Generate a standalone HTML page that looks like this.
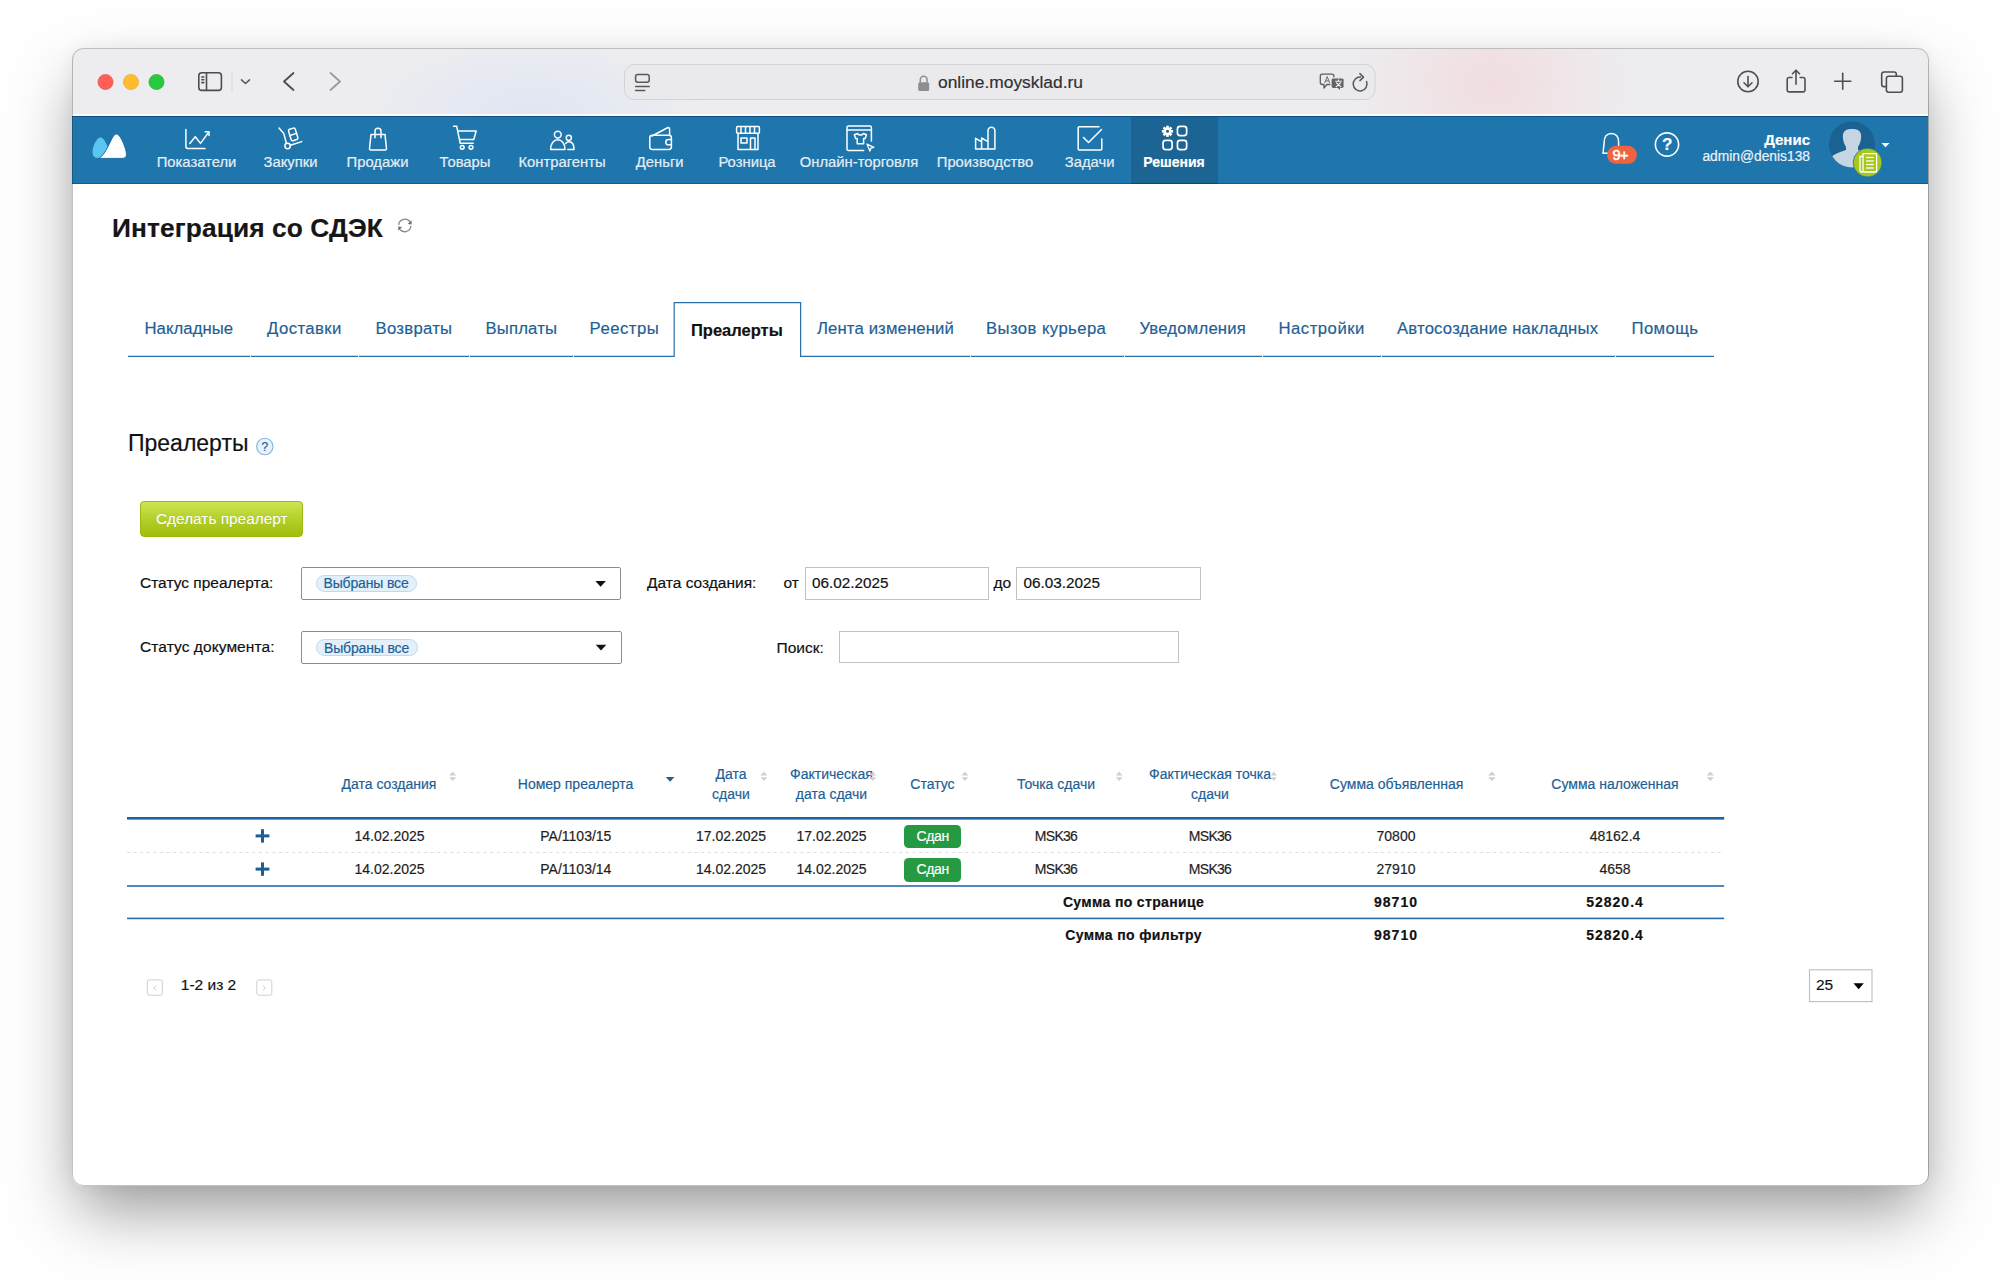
<!DOCTYPE html>
<html><head><meta charset="utf-8">
<style>
*{box-sizing:border-box;margin:0;padding:0}
html,body{width:2000px;height:1280px;overflow:hidden;background:#fefefe;font-family:"Liberation Sans",sans-serif}
.a{position:absolute}
.t{position:absolute;white-space:nowrap;line-height:1;-webkit-text-stroke:0.18px currentColor}
.c{font-size:14px;transform:translateX(-50%)}
#win{position:absolute;left:72px;top:48px;width:1856px;height:1138px;border-radius:11px;background:#fff;overflow:hidden;
 box-shadow:0 30px 64px -6px rgba(0,0,0,0.40),0 0 18px rgba(0,0,0,0.05)}
#wb{position:absolute;left:71.5px;top:47.6px;width:1857px;height:1138.6px;border-radius:11.5px;border:1px solid rgba(0,0,0,0.24);pointer-events:none}
#tb{position:absolute;left:0;top:0;width:1856px;height:66px;border-top:1.2px solid #fafafb;
 background:radial-gradient(ellipse 170px 75px at 458px 64px,rgba(210,222,246,0.5),rgba(210,222,246,0) 100%),radial-gradient(ellipse 150px 120px at 1420px 34px,rgba(244,208,210,0.55),rgba(244,208,210,0) 100%),#ededf0}
#nav{position:absolute;left:0;top:67.5px;width:1856px;height:68.2px;background:#1f76ad;border-top:1.6px solid #0f5088;border-bottom:1.5px solid #0b5c9b}
#wl{position:absolute;left:0;top:66px;width:1856px;height:1.5px;background:#fbfbfc}
.ni{-webkit-text-stroke:0.2px currentColor;position:absolute;top:154.7px;color:#e4eef6;font-size:14.8px;line-height:1;white-space:nowrap;transform:translateX(-50%)}
svg{position:absolute;overflow:visible}
</style></head><body>
<div id="win">
 <div id="tb"></div>
 <div id="wl"></div>
 <div id="nav"></div>
 <div class="a" style="left:1059.1px;top:69.1px;width:87.2px;height:66.6px;background:#1b6493;border-bottom:1.5px solid #014a80"></div>
</div>

<div id="wb"></div>
<!-- toolbar icons -->
<svg style="left:0;top:0" width="2000" height="120" viewBox="0 0 2000 120">
 <circle cx="105.5" cy="82" r="7.6" fill="#fe5f57" stroke="#e24a41" stroke-width="0.6"/>
 <circle cx="131" cy="82" r="7.6" fill="#febc2e" stroke="#e0a21a" stroke-width="0.6"/>
 <circle cx="156.5" cy="82" r="7.6" fill="#28c840" stroke="#1eaa32" stroke-width="0.6"/>
 <g fill="none" stroke="#4d4d50" stroke-width="1.6" stroke-linecap="round" stroke-linejoin="round">
  <rect x="198.8" y="72.8" width="22.6" height="17.6" rx="3"/>
  <line x1="206.5" y1="73" x2="206.5" y2="90.2"/>
  <line x1="201.8" y1="77" x2="203.8" y2="77"/>
  <line x1="201.8" y1="79.8" x2="203.8" y2="79.8"/>
  <line x1="201.8" y1="82.6" x2="203.8" y2="82.6"/>
  <polyline points="241.5,79.8 245.5,83.5 249.5,79.8" stroke="#5a5a60"/>
  <polyline points="293.5,73 284,81.5 293.5,90" stroke-width="1.8"/>
  <polyline points="330.5,73 340,81.5 330.5,90" stroke="#9a9a9e" stroke-width="1.8"/>
 </g>
 <line x1="232" y1="71" x2="232" y2="93" stroke="#d8d8dc" stroke-width="1"/>
 <!-- url bar -->
 <rect x="624.5" y="64.5" width="750.5" height="35" rx="10" fill="#eaeaed" stroke="#d2d2d6" stroke-width="1"/>
 <g fill="none" stroke="#58585c" stroke-width="1.5" stroke-linecap="round">
  <rect x="635.6" y="74.4" width="13.6" height="7.8" rx="2.2"/>
  <line x1="635.6" y1="86.4" x2="649.2" y2="86.4"/>
  <line x1="635.6" y1="90.6" x2="644.8" y2="90.6"/>
 </g>
 <g>
  <path d="M920.3,82.5 v-2.8 a3.4,3.4 0 0 1 6.8,0 v2.8" fill="none" stroke="#8e8e92" stroke-width="1.5"/>
  <rect x="918.2" y="82.3" width="11" height="8.8" rx="1.6" fill="#8e8e92"/>
 </g>
 <!-- translate icon -->
 <g>
  <path d="M1322.3,74.2 h9.6 a2,2 0 0 1 2,2 v6.3 a2,2 0 0 1 -2,2 h-5 l-2.9,3.6 v-3.6 h-1.7 a2,2 0 0 1 -2,-2 v-6.3 a2,2 0 0 1 2,-2 z" fill="none" stroke="#5c5c60" stroke-width="1.3" stroke-linejoin="round"/>
  <path d="M1324.7,83 L1327.2,76.6 L1329.7,83 M1325.6,80.9 h3.2" fill="none" stroke="#6a6a6e" stroke-width="1"/>
  <path d="M1333,77.8 h9.2 a2,2 0 0 1 2,2 v6.7 a2,2 0 0 1 -2,2 h-1.6 v3 l-3,-3 h-4.6 a2,2 0 0 1 -2,-2 v-6.7 a2,2 0 0 1 2,-2 z" fill="#636367" stroke="#ededf0" stroke-width="1.2"/>
  <path d="M1335.2,81.3 h6.6 M1338.5,79.6 v1.6 M1336.2,82.5 l5,4.6 M1340.8,82.5 l-5,4.6" fill="none" stroke="#f2f2f2" stroke-width="1.1"/>
 </g>
 <path d="M1366.6,81.6 A6.9,6.9 0 1 1 1360.4,77.1" fill="none" stroke="#58585c" stroke-width="1.5" stroke-linecap="round"/>
 <polyline points="1359.9,73.6 1363.5,77.1 1359.9,80.6" fill="none" stroke="#58585c" stroke-width="1.5" stroke-linecap="round" stroke-linejoin="round"/>
 <!-- right icons -->
 <g fill="none" stroke="#4f4f53" stroke-width="1.6" stroke-linecap="round" stroke-linejoin="round">
  <circle cx="1748" cy="81.5" r="10.2"/>
  <line x1="1748" y1="76.5" x2="1748" y2="86.5"/>
  <polyline points="1744,82.8 1748,86.7 1752,82.8"/>
  <path d="M1792,77.5 h-3 a1.8,1.8 0 0 0 -1.8,1.8 v10.8 a1.8,1.8 0 0 0 1.8,1.8 h14.2 a1.8,1.8 0 0 0 1.8,-1.8 v-10.8 a1.8,1.8 0 0 0 -1.8,-1.8 h-3"/>
  <line x1="1796" y1="70.5" x2="1796" y2="84.2"/>
  <polyline points="1792.5,73.8 1796,70.2 1799.5,73.8"/>
  <line x1="1834.6" y1="81.2" x2="1850.8" y2="81.2"/>
  <line x1="1842.7" y1="73.2" x2="1842.7" y2="89.2"/>
  <path d="M1885.5,86.6 h-1.6 a2.2,2.2 0 0 1 -2.2,-2.2 v-10.2 a2.2,2.2 0 0 1 2.2,-2.2 h10.2 a2.2,2.2 0 0 1 2.2,2.2 v1.6"/>
  <rect x="1886.4" y="76.2" width="16" height="16" rx="2.2"/>
 </g>
</svg>
<div class="t" style="left:938px;top:74px;font-size:17.4px;color:#303033">online.moysklad.ru</div>

<!-- nav -->
<svg style="left:0;top:0" width="2000" height="190" viewBox="0 0 2000 190">
 <!-- logo -->
 <path d="M98,158 C93.5,158 92.2,154.5 92.6,150.5 C93.2,144.5 97,137.6 100.5,137.4 C103,137.3 105.2,141 107.8,146.5 L103.5,155.5 C102,157.4 100,158 98,158 Z" fill="#5ac4f2"/>
 <path d="M99,158.4 C104,155.5 108,146.5 111.6,139.2 C113.2,136 114.6,134 116.4,134 C119,134 122,139 124.5,146 C126,150 126.6,153 126.4,155.2 C126.1,157.4 124.6,158.4 122,158.4 Z" fill="#fff" stroke="#16629a" stroke-width="0.9"/>
 <g fill="none" stroke="#fff" stroke-width="1.5" stroke-linecap="round" stroke-linejoin="round">
  <!-- Показатели -->
  <path d="M185.9,129.5 V146.6 a1.9,1.9 0 0 0 1.9,1.9 H205"/>
  <polyline points="189.8,143.4 195.3,136.7 200.5,143.4 208.6,132.4"/>
  <polyline points="205.2,131.8 209,131.8 209,135.6"/>
  <!-- Закупки -->
  <path d="M279,128 L283.8,133.6 L286.4,143.3"/>
  <circle cx="287.6" cy="146" r="2.7"/>
  <line x1="290.4" y1="145.3" x2="301.8" y2="141.6"/>
  <g transform="rotate(-17 293.2 134.4)"><rect x="289.7" y="128.4" width="7" height="12" rx="1.6"/><line x1="289.7" y1="134.4" x2="296.7" y2="134.4"/></g>
  <!-- Продажи -->
  <path d="M371,134.5 h14 l1.5,14.2 a1.2,1.2 0 0 1 -1.2,1.3 h-14.6 a1.2,1.2 0 0 1 -1.2,-1.3z"/>
  <path d="M375,137.8 v-6.5 a3,3 0 0 1 6,0 v6.5"/>
  <!-- Товары -->
  <path d="M453.5,126.3 h3.2 l3.5,17 h13"/>
  <path d="M458.2,131 h18 l-2.5,8.6 h-14"/>
  <circle cx="462.2" cy="147.3" r="1.9"/><circle cx="471" cy="147.3" r="1.9"/>
  <!-- Контрагенты -->
  <circle cx="557.8" cy="134.6" r="3.4"/>
  <path d="M550.6,149.4 C550.6,143 554,139.8 557.8,139.8 C561.6,139.8 565,143 565,149.4z"/>
  <circle cx="568.8" cy="137.8" r="2.6"/>
  <path d="M565.8,143.5 C566.5,142.3 567.5,141.8 568.8,141.8 C572,141.8 574,144.8 574,149.4 h-6.2"/>
  <!-- Деньги -->
  <path d="M652,136 L668,127.5 a1.5,1.5 0 0 1 1.6,1.4 v6.2"/>
  <rect x="649.8" y="135.2" width="21.6" height="14.2" rx="2.4"/>
  <path d="M671.4,139.6 h-3 a2.6,2.6 0 0 0 0,5.2 h3"/>
  <!-- Розница -->
  <rect x="736.6" y="126.6" width="22.8" height="6.6" rx="1"/>
  <line x1="741" y1="127" x2="741" y2="133"/><line x1="745.5" y1="127" x2="745.5" y2="133"/><line x1="750" y1="127" x2="750" y2="133"/><line x1="754.5" y1="127" x2="754.5" y2="133"/>
  <polyline points="738,133.5 738,149.5 758,149.5 758,133.5"/>
  <rect x="741" y="138" width="6" height="5"/>
  <polyline points="750.5,149.5 750.5,138 755,138 755,149.5"/>
  <!-- Онлайн-торговля --><g transform="translate(0.9 0)">
  <path d="M870.5,141 v-13.5 a1.6,1.6 0 0 0 -1.6,-1.6 h-21.2 a1.6,1.6 0 0 0 -1.6,1.6 v21.4 a1.6,1.6 0 0 0 1.6,1.6 h15"/>
  <line x1="846.5" y1="129.9" x2="870.5" y2="129.9"/>
  <path d="M853.5,134.8 l3,-1.3 c0.8,1.2 2.2,1.6 3,1.6 c0.8,0 2.2,-0.4 3,-1.6 l3,1.3 l-1.2,3.6 h-1.6 v5.4 h-6.4 v-5.4 h-1.6z"/>
  <path d="M866,144 l7,3.3 l-3,0.8 l-1,3 z" stroke-width="1.3"/></g>
  <!-- Производство -->
  <path d="M975.6,149 V138.3 L981.6,141.8 V138 L988,141.6 M988,149 V130.6 A3.45,3.45 0 0 1 994.9,130.6 V149 Z M981.6,149 V141.8 M975.6,149 H988"/>
  <!-- Задачи -->
  <path d="M1099,126.8 h-19.8 a1,1 0 0 0 -1,1 v21.2 a1,1 0 0 0 1,1 h21.6 a1,1 0 0 0 1,-1 v-10"/>
  <polyline points="1083.5,137.5 1088.5,142.5 1101.5,129.5"/>
  <!-- Решения -->
  <rect x="1177.45" y="126.35" width="9.2" height="9.3" rx="2.6" stroke-width="1.7"/>
  <rect x="1163.05" y="140.35" width="9.05" height="9.3" rx="2.6" stroke-width="1.7"/>
  <rect x="1177.45" y="140.35" width="9.2" height="9.3" rx="2.6" stroke-width="1.7"/>
 </g>
 <!-- gear -->
 <g transform="translate(1167.5 131.3)">
  <circle r="3.9" fill="#fff"/>
  <g fill="#fff"><rect x="-1.3" y="-5.6" width="2.6" height="11.2"/><rect x="-1.3" y="-5.6" width="2.6" height="11.2" transform="rotate(45)"/><rect x="-1.3" y="-5.6" width="2.6" height="11.2" transform="rotate(90)"/><rect x="-1.3" y="-5.6" width="2.6" height="11.2" transform="rotate(135)"/></g>
  <circle r="1.5" fill="#1c6595"/>
 </g>
 <!-- bell -->
 <path d="M1603,153.5 l1.2,-11.5 c0,-5 2.5,-8.6 7.2,-8.6 c4.7,0 7.2,3.6 7.2,8.6 v5" fill="none" stroke="#fff" stroke-width="1.5" stroke-linejoin="round"/>
 <line x1="1602.5" y1="153.2" x2="1608" y2="153.2" stroke="#fff" stroke-width="1.5"/>
 <rect x="1607" y="145.8" width="30" height="18" rx="9" fill="#ef6341"/>
 <circle cx="1667" cy="144.5" r="11.6" fill="none" stroke="#fff" stroke-width="1.6"/>
 <!-- avatar -->
 <circle cx="1852" cy="144.5" r="23" fill="#1b6292"/>
 <clipPath id="avc"><circle cx="1852" cy="144.5" r="23"/></clipPath>
 <g clip-path="url(#avc)" fill="#c5d5e2">
  <path d="M1843,138.5 C1842,131 1846,129 1852,129 C1858,129 1862,131 1861,138.5 C1860.5,143 1859,145 1858,147 L1858,150 C1864,152 1870,154 1874,158 L1874,170 L1830,170 L1830,158 C1834,154 1840,152 1846,150 L1846,147 C1845,145 1843.5,143 1843,138.5z"/>
 </g>
 <circle cx="1867.6" cy="162.6" r="14.4" fill="#a6c71b" stroke="#1f70a5" stroke-width="0.8"/>
 <g fill="none" stroke="#fff" stroke-width="1.3">
  <rect x="1863" y="153.6" width="13.6" height="18.4" rx="0.8"/>
  <path d="M1863,156.5 h-3 v13.5 a2,2 0 0 0 2,2 h1"/>
  <line x1="1866" y1="157.5" x2="1873.8" y2="157.5"/>
  <line x1="1866" y1="161" x2="1873.8" y2="161"/>
  <line x1="1866" y1="164.5" x2="1873.8" y2="164.5"/>
  <line x1="1866" y1="168" x2="1873.8" y2="168"/>
 </g>
 <polygon points="1881.5,143 1889.5,143 1885.5,147.2" fill="#fff"/>
</svg>
<div class="ni" style="left:196.5px">Показатели</div>
<div class="ni" style="left:290.5px">Закупки</div>
<div class="ni" style="left:377.5px">Продажи</div>
<div class="ni" style="left:465px">Товары</div>
<div class="ni" style="left:562px">Контрагенты</div>
<div class="ni" style="left:659.7px">Деньги</div>
<div class="ni" style="left:747px">Розница</div>
<div class="ni" style="left:859px">Онлайн-торговля</div>
<div class="ni" style="left:985px">Производство</div>
<div class="ni" style="left:1089.6px">Задачи</div>
<div class="ni" style="left:1174px;font-weight:bold;color:#fff;font-size:14px;top:154.6px">Решения</div>
<div class="t" style="left:1612.6px;top:147.6px;font-size:14.6px;color:#fff;letter-spacing:-0.6px;-webkit-text-stroke:0.5px #fff">9+</div>
<div class="t" style="left:1667.2px;top:136px;font-size:17px;font-weight:bold;color:#fff;transform:translateX(-50%)">?</div>
<div class="t" style="right:190px;top:131.6px;font-size:15px;font-weight:bold;color:#fff">Денис</div>
<div class="t" style="right:190px;top:150px;font-size:13.8px;color:#eef4f9">admin@denis138</div>

<!-- page content -->
<div class="t" style="left:112px;top:214.5px;font-size:26.3px;font-weight:bold;color:#161616;letter-spacing:0.1px">Интеграция со СДЭК</div>
<svg style="left:0;top:0" width="2000" height="1280" viewBox="0 0 2000 1280">
 <g fill="none" stroke="#8a8a8a" stroke-width="1.3">
  <path d="M398.7,224.9 A6.2,6.2 0 0 1 410.3,222.4"/>
  <path d="M410.9,226 A6.2,6.2 0 0 1 399.3,228.5"/>
 </g>
 <polygon points="411.6,220.2 411.6,224.4 407.6,223.9" fill="#707070"/>
 <polygon points="398.2,230.6 398.2,226.4 402.2,226.9" fill="#707070"/>
 <!-- tabs -->
 <g stroke="#2a6fa6" stroke-width="1.2" fill="none">
  <polyline points="128,356.4 674.2,356.4 674.2,302.6 800.6,302.6 800.6,356.4 1714,356.4"/>
 </g>
 <g stroke="#ffffff" stroke-width="1.2">
  <line x1="250" y1="356.4" x2="251" y2="356.4"/><line x1="358" y1="356.4" x2="359" y2="356.4"/>
  <line x1="469" y1="356.4" x2="470" y2="356.4"/><line x1="573" y1="356.4" x2="574" y2="356.4"/>
  <line x1="970" y1="356.4" x2="971" y2="356.4"/><line x1="1124" y1="356.4" x2="1125" y2="356.4"/>
  <line x1="1262" y1="356.4" x2="1263" y2="356.4"/><line x1="1381" y1="356.4" x2="1382" y2="356.4"/>
  <line x1="1615" y1="356.4" x2="1616" y2="356.4"/>
 </g>
 <!-- help icon -->
 <circle cx="264.8" cy="446.5" r="8.2" fill="#e6f2fb" stroke="#86b5da" stroke-width="1.1"/>
</svg>
<div class="t" style="left:144.5px;top:321px;font-size:16.7px;color:#1d5f96;letter-spacing:0.06px">Накладные</div>
<div class="t" style="left:267px;top:321px;font-size:16.7px;color:#1d5f96;letter-spacing:0.43px">Доставки</div>
<div class="t" style="left:375.5px;top:321px;font-size:16.7px;color:#1d5f96;letter-spacing:0.29px">Возвраты</div>
<div class="t" style="left:485.5px;top:321px;font-size:16.7px;color:#1d5f96;letter-spacing:0.17px">Выплаты</div>
<div class="t" style="left:589.5px;top:321px;font-size:16.7px;color:#1d5f96;letter-spacing:0.5px">Реестры</div>
<div class="t" style="left:691px;top:322px;font-size:16.5px;font-weight:bold;color:#111">Преалерты</div>
<div class="t" style="left:817px;top:321px;font-size:16.7px;color:#1d5f96;letter-spacing:0.14px">Лента изменений</div>
<div class="t" style="left:986px;top:321px;font-size:16.7px;color:#1d5f96;letter-spacing:0.42px">Вызов курьера</div>
<div class="t" style="left:1139.5px;top:321px;font-size:16.7px;color:#1d5f96;letter-spacing:0.2px">Уведомления</div>
<div class="t" style="left:1278.5px;top:321px;font-size:16.7px;color:#1d5f96;letter-spacing:0.5px">Настройки</div>
<div class="t" style="left:1397px;top:321px;font-size:16.7px;color:#1d5f96;letter-spacing:0.19px">Автосоздание накладных</div>
<div class="t" style="left:1631.5px;top:321px;font-size:16.7px;color:#1d5f96;letter-spacing:0.4px">Помощь</div>

<div class="t" style="left:128px;top:432.2px;font-size:23px;color:#111">Преалерты</div>
<div class="t" style="left:264.9px;top:441.2px;font-size:12px;color:#1f5f96;transform:translateX(-50%)">?</div>

<div class="a" style="left:140.3px;top:501.2px;width:162.5px;height:35.6px;border-radius:4px;border:1px solid #9cb912;background:linear-gradient(#cde552,#b3d02a 50%,#a1bd10)"></div>
<div class="t" style="left:156px;top:510.5px;font-size:15.4px;color:#fff;text-shadow:0 -0.5px 0.8px rgba(70,90,0,0.45)">Сделать преалерт</div>

<div class="t" style="left:140px;top:574.5px;font-size:15.5px;color:#111">Статус преалерта:</div>
<div class="t" style="left:140px;top:639.3px;font-size:15.5px;color:#111;letter-spacing:0.08px">Статус документа:</div>
<div class="a" style="left:300.5px;top:567.4px;width:320.5px;height:32.3px;border:1px solid #8d8d8d;border-radius:2px"></div>
<div class="a" style="left:300.8px;top:631.2px;width:320.8px;height:33px;border:1px solid #8d8d8d;border-radius:2px"></div>
<div class="a" style="left:315.9px;top:574.9px;width:101.5px;height:17.2px;border-radius:9px;border:1px solid #bcdaf0;background:#e3f0fa"></div>
<div class="a" style="left:316.2px;top:638.7px;width:102px;height:17.2px;border-radius:9px;border:1px solid #bcdaf0;background:#e3f0fa"></div>
<div class="t" style="left:323.5px;top:576.3px;font-size:14px;letter-spacing:-0.15px;color:#1d5f96">Выбраны все</div>
<div class="t" style="left:324px;top:640.6px;font-size:14px;letter-spacing:-0.15px;color:#1d5f96">Выбраны все</div>
<svg style="left:0;top:0" width="2000" height="1280" viewBox="0 0 2000 1280">
 <polygon points="595.4,581 605.9,581 600.6,586.8" fill="#111"/>
 <polygon points="595.8,644.8 606.3,644.8 601,650.6" fill="#111"/>
</svg>

<div class="t" style="left:647px;top:574.5px;font-size:15.5px;color:#111">Дата создания:</div>
<div class="t" style="left:783.5px;top:574.5px;font-size:15.5px;color:#111">от</div>
<div class="a" style="left:805px;top:567px;width:184px;height:32.5px;border:1px solid #c2c2c2"></div>
<div class="t" style="left:812px;top:575px;font-size:15.3px;color:#111">06.02.2025</div>
<div class="t" style="left:993.5px;top:574.5px;font-size:15.5px;color:#111">до</div>
<div class="a" style="left:1016px;top:567px;width:184.5px;height:32.5px;border:1px solid #c2c2c2"></div>
<div class="t" style="left:1023.5px;top:575px;font-size:15.3px;color:#111">06.03.2025</div>
<div class="t" style="left:776.6px;top:639.6px;font-size:15.5px;color:#111">Поиск:</div>
<div class="a" style="left:839px;top:631px;width:339.6px;height:32.4px;border:1px solid #c2c2c2"></div>

<!-- table -->
<div class="t c" style="left:389px;top:776.8px;color:#1d5f96">Дата создания</div>
<div class="t c" style="left:575.5px;top:776.8px;color:#1d5f96">Номер преалерта</div>
<div class="t c" style="left:731px;top:767px;color:#1d5f96">Дата</div>
<div class="t c" style="left:731px;top:786.5px;color:#1d5f96">сдачи</div>
<div class="t c" style="left:831.5px;top:767px;color:#1d5f96">Фактическая</div>
<div class="t c" style="left:831.5px;top:786.5px;color:#1d5f96">дата сдачи</div>
<div class="t c" style="left:932.5px;top:776.8px;color:#1d5f96">Статус</div>
<div class="t c" style="left:1056px;top:776.8px;color:#1d5f96">Точка сдачи</div>
<div class="t c" style="left:1210px;top:767px;color:#1d5f96">Фактическая точка</div>
<div class="t c" style="left:1210px;top:786.5px;color:#1d5f96">сдачи</div>
<div class="t c" style="left:1396.6px;top:776.8px;color:#1d5f96">Сумма объявленная</div>
<div class="t c" style="left:1615px;top:776.8px;color:#1d5f96">Сумма наложенная</div>
<div class="t c" style="left:389.5px;top:829px;color:#1e1e1e">14.02.2025</div>
<div class="t c" style="left:575.8px;top:829px;color:#1e1e1e">РА/1103/15</div>
<div class="t c" style="left:731px;top:829px;color:#1e1e1e">17.02.2025</div>
<div class="t c" style="left:831.5px;top:829px;color:#1e1e1e">17.02.2025</div>
<div class="t c" style="left:1056px;top:829px;color:#1e1e1e;letter-spacing:-0.7px">MSK36</div>
<div class="t c" style="left:1210px;top:829px;color:#1e1e1e;letter-spacing:-0.7px">MSK36</div>
<div class="t c" style="left:1396px;top:829px;color:#1e1e1e">70800</div>
<div class="t c" style="left:1615px;top:829px;color:#1e1e1e">48162.4</div>
<div class="t c" style="left:389.5px;top:862px;color:#1e1e1e">14.02.2025</div>
<div class="t c" style="left:575.8px;top:862px;color:#1e1e1e">РА/1103/14</div>
<div class="t c" style="left:731px;top:862px;color:#1e1e1e">14.02.2025</div>
<div class="t c" style="left:831.5px;top:862px;color:#1e1e1e">14.02.2025</div>
<div class="t c" style="left:1056px;top:862px;color:#1e1e1e;letter-spacing:-0.7px">MSK36</div>
<div class="t c" style="left:1210px;top:862px;color:#1e1e1e;letter-spacing:-0.7px">MSK36</div>
<div class="t c" style="left:1396px;top:862px;color:#1e1e1e">27910</div>
<div class="t c" style="left:1615px;top:862px;color:#1e1e1e">4658</div>
<div class="t c" style="left:1133.5px;top:895px;color:#111;font-weight:bold;letter-spacing:0.35px">Сумма по странице</div>
<div class="t c" style="left:1396px;top:895px;color:#111;font-weight:bold;letter-spacing:1px">98710</div>
<div class="t c" style="left:1615px;top:895px;color:#111;font-weight:bold;letter-spacing:1px">52820.4</div>
<div class="t c" style="left:1133.5px;top:927.5px;color:#111;font-weight:bold;letter-spacing:0.35px">Сумма по фильтру</div>
<div class="t c" style="left:1396px;top:927.5px;color:#111;font-weight:bold;letter-spacing:1px">98710</div>
<div class="t c" style="left:1615px;top:927.5px;color:#111;font-weight:bold;letter-spacing:1px">52820.4</div>
<div class="a" style="left:904.4px;top:824.6px;width:56.6px;height:23.8px;border-radius:4.5px;background:#259a43"></div>
<div class="a" style="left:904.4px;top:858px;width:56.6px;height:23.8px;border-radius:4.5px;background:#259a43"></div>
<div class="t c" style="left:932.7px;top:829px;color:#fff;letter-spacing:-0.3px">Сдан</div>
<div class="t c" style="left:932.7px;top:862.4px;color:#fff;letter-spacing:-0.3px">Сдан</div>
<svg style="left:0;top:0" width="2000" height="1280" viewBox="0 0 2000 1280">
 <rect x="127" y="817" width="1597.2" height="2.6" fill="#1f62a0"/>
 <line x1="127" y1="852.5" x2="1724" y2="852.5" stroke="#dedede" stroke-width="1" stroke-dasharray="3 3.6"/>
 <rect x="127" y="885.2" width="1597.2" height="1.6" fill="#2a6ca6"/>
 <rect x="127" y="917.6" width="1597.2" height="1.6" fill="#2a6ca6"/>
 <g fill="#1c5e94">
  <rect x="255.6" y="834.4" width="13.8" height="3"/><rect x="261" y="829.2" width="3" height="13.4"/>
  <rect x="255.6" y="867.6" width="13.8" height="3"/><rect x="261" y="862.4" width="3" height="13.4"/>
 </g>
 <g fill="#d0d0d0">
  <polygon points="449.2,775.4 456.2,775.4 452.7,771.6"/><polygon points="449.2,777.2 456.2,777.2 452.7,781"/>
  <polygon points="760.5,775.4 767.2,775.4 763.9,771.6"/><polygon points="760.5,777.2 767.2,777.2 763.9,781"/>
  <polygon points="869.6,775.4 876.2,775.4 872.9,771.6"/><polygon points="869.6,777.2 876.2,777.2 872.9,781"/>
  <polygon points="961.6,775.4 968.2,775.4 964.9,771.6"/><polygon points="961.6,777.2 968.2,777.2 964.9,781"/>
  <polygon points="1115.8,775.4 1122.7,775.4 1119.2,771.6"/><polygon points="1115.8,777.2 1122.7,777.2 1119.2,781"/>
  <polygon points="1270.7,775.4 1276.9,775.4 1273.8,771.6"/><polygon points="1270.7,777.2 1276.9,777.2 1273.8,781"/>
  <polygon points="1488.0,775.4 1495.8,775.4 1491.9,771.6"/><polygon points="1488.0,777.2 1495.8,777.2 1491.9,781"/>
  <polygon points="1706.6,775.4 1714.0,775.4 1710.3,771.6"/><polygon points="1706.6,777.2 1714.0,777.2 1710.3,781"/>
 </g>
 <polygon points="665.8,777 674.4,777 670.1,781.8" fill="#1d5f96"/>
 <!-- pagination -->
 <rect x="147.4" y="979.9" width="15" height="15.3" rx="2" fill="#fff" stroke="#cfcfcf" stroke-width="1"/>
 <rect x="256.8" y="979.9" width="15" height="15.3" rx="2" fill="#fff" stroke="#cfcfcf" stroke-width="1"/>
 <polyline points="156,985.4 153.8,987.8 156,990.2" fill="none" stroke="#c4c4c4" stroke-width="0.9"/>
 <polyline points="263,985.4 265.2,987.8 263,990.2" fill="none" stroke="#c4c4c4" stroke-width="0.9"/>
 <rect x="1809.5" y="969.8" width="62.5" height="31.8" fill="#fff" stroke="#bdbdbd" stroke-width="1.1"/>
 <polygon points="1853.5,983.3 1863.8,983.3 1858.6,989.2" fill="#000"/>
</svg>
<div class="t" style="left:180.8px;top:977px;font-size:15.5px;color:#111">1-2 из 2</div>
<div class="t" style="left:1816px;top:977px;font-size:15.5px;color:#111">25</div>

</body></html>
